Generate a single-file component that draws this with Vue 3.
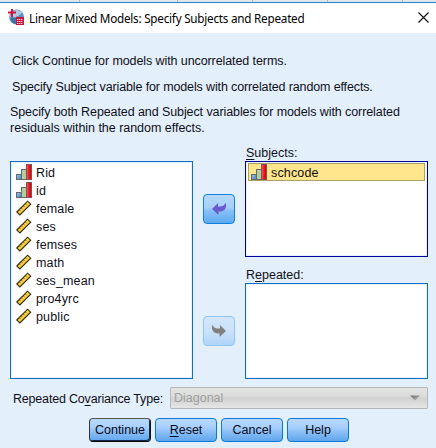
<script setup>
const variables = [
  { name: 'Rid', kind: 'ordinal' },
  { name: 'id', kind: 'ordinal' },
  { name: 'female', kind: 'scale' },
  { name: 'ses', kind: 'scale' },
  { name: 'femses', kind: 'scale' },
  { name: 'math', kind: 'scale' },
  { name: 'ses_mean', kind: 'scale' },
  { name: 'pro4yrc', kind: 'scale' },
  { name: 'public', kind: 'scale' },
]
</script>

<template>
  <div class="dialog">
    <svg width="0" height="0" class="defs">
      <defs>
        <linearGradient id="gBlue" x1="0" y1="0" x2="1" y2="1">
          <stop offset="0" stop-color="#9cc8f4" /><stop offset="1" stop-color="#3f78b8" />
        </linearGradient>
        <linearGradient id="gRed" x1="0" y1="0" x2="1" y2="0">
          <stop offset="0" stop-color="#ff6a6a" /><stop offset=".45" stop-color="#ee1c24" /><stop offset="1" stop-color="#c80008" />
        </linearGradient>
        <linearGradient id="gGrey" x1="0" y1="0" x2="1" y2="1">
          <stop offset="0" stop-color="#6c6c6c" /><stop offset="1" stop-color="#c0c0c0" />
        </linearGradient>
        <symbol id="ordinal" viewBox="0 0 16 16">
          <rect x=".5" y="10.5" width="5" height="5" fill="url(#gBlue)" stroke="#66686c" />
          <rect x="5.5" y="5.5" width="5" height="10" fill="#b4d09a" stroke="#66686c" />
          <rect x="10.5" y=".5" width="5" height="15" fill="url(#gRed)" stroke="#7c5458" />
        </symbol>
        <symbol id="scale" viewBox="0 0 16 16">
          <path d="M.8 12 11.600 1.200 14.700 4.200 3.900 15Z" fill="#fcc830" stroke="#33300f" stroke-width="1.1" />
          <path d="M3 12.500 12.300 3.200" stroke="#ffe27a" stroke-width="1" />
          <path d="m3.300 9.900 1.300 1.300M5.300 7.900l1.300 1.300M7.300 5.900l1.300 1.300M9.300 3.900l1.300 1.300" stroke="#5a4a10" stroke-width=".7" />
        </symbol>
      </defs>
    </svg>

    <div class="behind"><i /><i /><i /><i /><i /></div>
    <header class="title">
      <svg class="logo" width="17" height="17" viewBox="0 0 17 17">
        <circle cx="8.6" cy="8" r="7.4" fill="#5e91bd" />
        <path d="M3 4C6 0 12 0 14 4L10 7 5 9 2 8Z" fill="#a9cbe4" />
        <path d="M2 10c2 4 4 5 6 5V9L4 8Z" fill="#3f73a3" />
        <path d="M4 0v8M0 3.500H8" stroke="#d4143c" stroke-width="2" />
        <rect x="8" y="8" width="8" height="8" fill="#c8143c" />
        <path d="M9 10.500h6M9 12.500h6M9 14.500h6" stroke="#f6dfe6" stroke-dasharray="1.400 .6" />
      </svg>
      <h1>Linear Mixed Models: Specify Subjects and Repeated</h1>
      <svg class="close" width="11" height="11" viewBox="0 0 11 11"><path d="M.5.5 10.500 10.500M10.500.5.5 10.500" stroke="#111" stroke-width="1.15" /></svg>
    </header>

    <section class="intro">
      <p class="l1">Click Continue for models with uncorrelated terms.</p>
      <p class="l2">Specify Subject variable for models with correlated random effects.</p>
      <p class="l3">Specify both Repeated and Subject variables for models with correlated</p>
      <p class="l4">residuals within the random effects.</p>
    </section>

    <main class="body">
      <ul class="box source">
        <li v-for="v in variables" :key="v.name">
          <svg width="16" height="16"><use :href="'#' + v.kind" /></svg><span>{{ v.name }}</span>
        </li>
      </ul>
      <div class="movers">
        <button class="move">
          <svg width="16" height="14" viewBox="0 0 16 14"><path d="M1 7 7 1V4.500H9.500Q13 4.500 14 1.500H15V5Q13.500 9.500 8.500 9.500H7.500V12.500H7Z" fill="#6a5acd" /></svg>
        </button>
        <button class="move off">
          <svg width="16" height="14" viewBox="0 0 16 14"><path d="M15 7 9 1V4.500H6.500Q3 4.500 2 1.500H1V5Q2.500 9.500 7.500 9.500H8.500V12.500H9Z" fill="#808080" /></svg>
        </button>
      </div>
      <div class="targets">
        <label><u>S</u>ubjects:</label>
        <ul class="box focus">
          <li class="selected"><svg width="16" height="16"><use href="#ordinal" /></svg><span>schcode</span></li>
        </ul>
        <label class="second">R<u>e</u>peated:</label>
        <ul class="box"></ul>
      </div>
    </main>

    <div class="cov">
      <label>Repeated Co<u>v</u>ariance Type:</label>
      <div class="combo"><span>Diagonal</span>
        <svg width="10" height="6" viewBox="0 0 10 6"><path d="M0 .5H10L5 5.500Z" fill="url(#gGrey)" /></svg>
      </div>
    </div>

    <footer>
      <button class="btn default">Continue</button>
      <button class="btn"><u>R</u>eset</button>
      <button class="btn">Cancel</button>
      <button class="btn">Help</button>
    </footer>
  </div>
</template>

<style>
body { margin: 0; background: #e3effb; }
</style>

<style scoped>
.dialog {
  width: 436px; height: 448px; overflow: hidden; box-sizing: border-box;
  background: #e3effb; color: #101018;
  font: 12.5px/16px "Liberation Sans", Arial, sans-serif;
}
.defs { display: block; }
p, ul, h1 { margin: 0; padding: 0; font-weight: normal; }
u { text-decoration: underline; text-underline-offset: 2px; text-decoration-thickness: 1px; text-decoration-skip-ink: none; }
.behind {
  display: grid; grid-template-columns: 80px 98px 75px 75px 75px 33px;
  height: 2px; background: #e2e5e9; border-bottom: 1px solid #2584cb;
}
.behind i { border-right: 1px solid #a9bfd6; }
.title {
  height: 30px; background: #fff; display: flex; align-items: center;
  padding: 0 8px; box-sizing: border-box;
}
.logo { margin-top: -2px; }
.title h1 { font: 11.7px/16px "Noto Sans", "Open Sans", sans-serif; letter-spacing: -.23px; color: #000; margin: -1px 0 0 4px; white-space: nowrap; flex: 1; }
.close { margin: -2px -1px 0 0; }
.intro { height: 112px; padding: 20px 0 0 12px; box-sizing: border-box; white-space: nowrap; letter-spacing: -.09px; }
.l1 { height: 26px; line-height: 17px; }
.l2 { height: 25px; line-height: 17px; letter-spacing: -.13px; }
.l3, .l4 { margin-left: -2px; height: 16px; }
.l4 { letter-spacing: -.03px; }
.body { display: flex; height: 234px; padding-left: 10px; }
.box {
  box-sizing: border-box; width: 183px; background: #fff;
  border: 1px solid #106ebe; list-style: none; box-shadow: inset -1px -1px #e9f2fb, inset 1px 1px #e9f2fb;
}
.source { margin-top: 16px; height: 218px; padding: 1px 0 0 5px; }
.box li { display: flex; align-items: center; height: 18px; gap: 4px; }
.box li span { margin-top: 1px; letter-spacing: .16px; }
.movers { width: 52px; display: flex; flex-direction: column; align-items: center; padding-top: 49px; gap: 92px; }
.move {
  width: 32px; height: 30px; padding: 0; border: 1px solid #0f80df; border-radius: 4px;
  background: linear-gradient(#b5d8fc, #a5d0fb 45%, #8ac1f8 55%, #5ca9ee);
  display: flex; align-items: center; justify-content: center;
}
.move.off { border-color: #90c5f3; background: linear-gradient(#d3e6fc, #cbe2fb 50%, #b0d4f8); }
.targets { display: flex; flex-direction: column; }
.targets label { height: 16px; padding-left: 1px; }
.targets .box { height: 96px; padding: 1px 2px; }
.targets .second { margin-top: 10px; }
.targets .focus { border-color: #0000a0; }
.box .selected { box-sizing: border-box; background: #ffe58c; border: 1px solid #ada063; padding-left: 2px; }
.cov { display: flex; align-items: center; height: 22px; margin-top: 8px; padding-left: 13px; }
.cov label { width: 157px; white-space: nowrap; letter-spacing: -.19px; margin-top: 1px; }
.combo {
  box-sizing: border-box; width: 258px; height: 22px; padding: 0 7px 0 3px;
  display: flex; align-items: center; justify-content: space-between;
  border: 1px solid #b4b7ba; border-radius: 1px; color: #a0a0a0;
  background: linear-gradient(#e3e3e3, #dcdcdc 40%, #d2d2d2 52%, #e6e6e6);
}
footer { display: flex; gap: 4px; margin: 9px 0 0 89px; }
.btn {
  width: 62px; height: 24px; padding: 0; font: inherit; color: #0a0a18;
  border: 1px solid #0a78d7; border-radius: 4px;
  background: linear-gradient(#b9dafe, #a9d0fc 35%, #88bdf6 62%, #5ea5ec);
}
.default { border-color: #555 #111 #000 #333; box-shadow: inset -1px -1px #102a48; }
</style>
